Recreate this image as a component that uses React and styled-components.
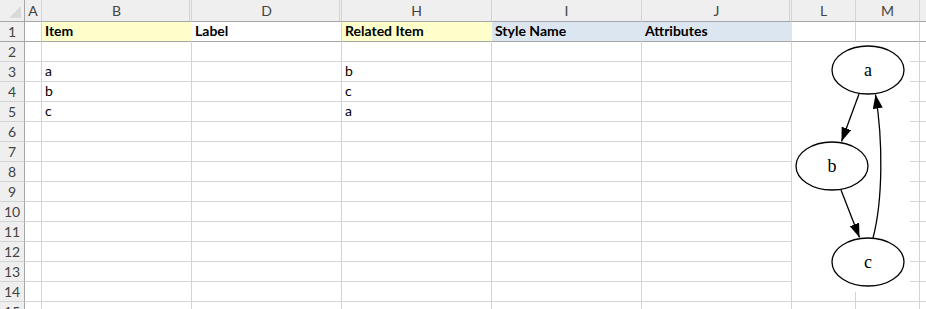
import React from 'react'
import styled, { createGlobalStyle, css } from 'styled-components'

const GlobalStyle = createGlobalStyle`
  html, body {
    margin: 0;
    padding: 0;
    background: #ffffff;
    overflow: hidden;
  }
  body {
    font-family: Lato, 'Liberation Sans', sans-serif;
  }
`

const GRID = '#d4d4d4'
const HEAD_LINE = '#a6a6a6'

const Sheet = styled.div`
  position: relative;
  width: 926px;
  height: 309px;
  overflow: hidden;
  display: grid;
  grid-template-columns: 25px 17px repeat(5, 150px) 64px 64px 1fr;
  grid-template-rows: 22px;
  grid-auto-rows: 20px;
`

const Corner = styled.div`
  position: relative;
  background: #efefef;
  border-right: 1px solid ${HEAD_LINE};
  border-bottom: 1px solid ${HEAD_LINE};

  &::after {
    content: '';
    position: absolute;
    right: 3px;
    bottom: 3px;
    width: 0;
    height: 0;
    border-left: 12px solid transparent;
    border-bottom: 12px solid #d9d9d9;
  }
`

const ColHead = styled.div`
  position: relative;
  box-sizing: border-box;
  background: #efefef;
  border-right: 1px solid ${GRID};
  border-bottom: 1px solid ${HEAD_LINE};
  display: flex;
  align-items: center;
  justify-content: center;
  font-size: 14px;
  color: #444444;

  ${p =>
    p.$hiddenAfter &&
    css`
      &::after {
        content: '';
        position: absolute;
        top: 0;
        bottom: 0;
        right: 1px;
        width: 1px;
        background: ${GRID};
      }
    `}
`

const RowHead = styled.div`
  box-sizing: border-box;
  background: #efefef;
  border-right: 1px solid ${HEAD_LINE};
  border-bottom: 1px solid ${p => (p.$frozen ? HEAD_LINE : GRID)};
  display: flex;
  align-items: center;
  justify-content: center;
  font-size: 14px;
  color: #444444;
`

const Cell = styled.div`
  box-sizing: border-box;
  border-right: 1px solid ${p => p.$fill || GRID};
  border-bottom: 1px solid ${p => (p.$frozen ? HEAD_LINE : GRID)};
  background: ${p => p.$fill || '#ffffff'};
  display: flex;
  align-items: flex-end;
  padding: 0 3px 1px;
  font-size: 14px;
  line-height: 18px;
  font-weight: ${p => (p.$bold ? 700 : 400)};
  color: #000000;
  white-space: nowrap;
  overflow: hidden;
`

const Picture = styled.div`
  position: absolute;
  left: 792px;
  top: 42px;
  width: 118px;
  height: 250px;
  background: #ffffff;
`

const YELLOW = '#ffffcc'
const BLUE = '#dce6f1'

const columns = [
  { key: 'A', hiddenAfter: false },
  { key: 'B', hiddenAfter: true },
  { key: 'D', hiddenAfter: true },
  { key: 'H', hiddenAfter: false },
  { key: 'I', hiddenAfter: false },
  { key: 'J', hiddenAfter: true },
  { key: 'L', hiddenAfter: false },
  { key: 'M', hiddenAfter: false },
  { key: '', hiddenAfter: false },
]

const header = ['', 'Item', 'Label', 'Related Item', 'Style Name', 'Attributes', '', '', '']
const headerFill = [null, YELLOW, null, YELLOW, BLUE, BLUE, null, null, null]

const data = {
  3: ['', 'a', '', 'b'],
  4: ['', 'b', '', 'c'],
  5: ['', 'c', '', 'a'],
}

const Graph = () => (
  <svg width="118" height="250" viewBox="792 42 118 250">
    <defs>
      <marker id="arrow" markerWidth="14" markerHeight="10" refX="14" refY="5" orient="auto" markerUnits="userSpaceOnUse">
        <path d="M0,0 L14,5 L0,10 Z" fill="#000" />
      </marker>
    </defs>
    <g fill="none" stroke="#000" strokeWidth="1.3">
      <ellipse cx="868" cy="70" rx="36" ry="24" />
      <ellipse cx="832" cy="166" rx="36" ry="24" />
      <ellipse cx="868" cy="262" rx="36" ry="24" />
      <path d="M859,94 L841.5,141.5" markerEnd="url(#arrow)" />
      <path d="M841,190 L859.5,237.5" markerEnd="url(#arrow)" />
      <path d="M873,238 C883,200 883,140 875.5,94.5" markerEnd="url(#arrow)" />
    </g>
    <g fontFamily="'Liberation Serif', 'DejaVu Serif', serif" fontSize="18" textAnchor="middle" fill="#000">
      <text x="868" y="76">a</text>
      <text x="832" y="172">b</text>
      <text x="868" y="268">c</text>
    </g>
  </svg>
)

export default function App() {
  const rows = []
  for (let r = 1; r <= 15; r++) {
    rows.push(
      <React.Fragment key={r}>
        <RowHead $frozen={r === 1}>{r}</RowHead>
        {columns.map((c, i) => {
          if (r === 1) {
            return (
              <Cell key={i} $frozen $bold $fill={headerFill[i]}>
                {header[i]}
              </Cell>
            )
          }
          return <Cell key={i}>{(data[r] && data[r][i]) || ''}</Cell>
        })}
      </React.Fragment>
    )
  }

  return (
    <>
      <GlobalStyle />
      <Sheet>
        <Corner />
        {columns.map((c, i) => (
          <ColHead key={i} $hiddenAfter={c.hiddenAfter}>
            {c.key}
          </ColHead>
        ))}
        {rows}
        <Picture>
          <Graph />
        </Picture>
      </Sheet>
    </>
  )
}
